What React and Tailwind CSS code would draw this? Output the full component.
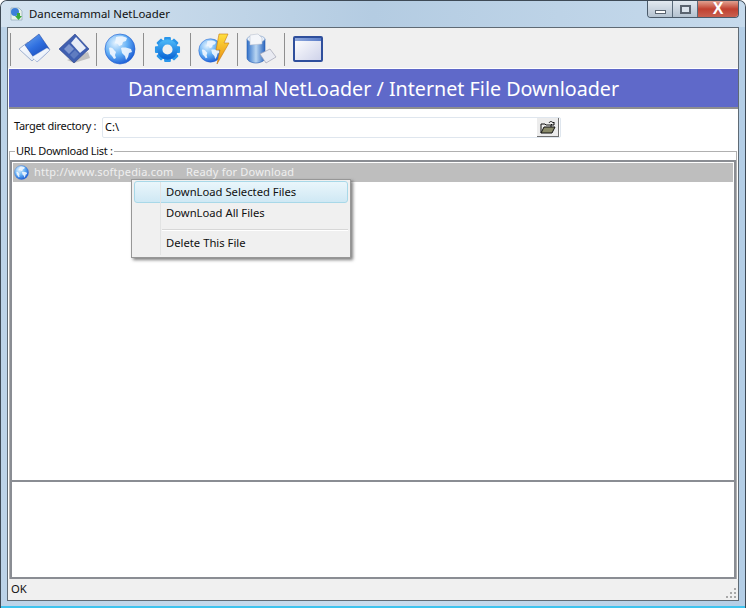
const uiFont = { fontFamily: '"Noto Sans", "DejaVu Sans", sans-serif' };

function Defs() {
  return (
    <svg width="0" height="0" className="absolute">
      <defs>
        <linearGradient id="blue" x1="0" y1="0" x2="0.6" y2="1">
          <stop offset="0" stopColor="#6fa8ee" />
          <stop offset="0.5" stopColor="#2f6fe0" />
          <stop offset="1" stopColor="#1644b0" />
        </linearGradient>
        <linearGradient id="sheet" x1="0" y1="0" x2="1" y2="1">
          <stop offset="0" stopColor="#ffffff" />
          <stop offset="1" stopColor="#dfe8f6" />
        </linearGradient>
        <radialGradient id="globe" cx="0.35" cy="0.3" r="0.8">
          <stop offset="0" stopColor="#e4f3ff" />
          <stop offset="0.5" stopColor="#64b0f5" />
          <stop offset="1" stopColor="#0f4fd0" />
        </radialGradient>
        <linearGradient id="gear" x1="0" y1="0" x2="0" y2="1">
          <stop offset="0" stopColor="#47b2f5" />
          <stop offset="1" stopColor="#0f6bd8" />
        </linearGradient>
        <linearGradient id="bolt" x1="0" y1="0" x2="0" y2="1">
          <stop offset="0" stopColor="#ffe040" />
          <stop offset="1" stopColor="#e88a10" />
        </linearGradient>
        <linearGradient id="db" x1="0" y1="0" x2="1" y2="0">
          <stop offset="0" stopColor="#2f6fc8" />
          <stop offset="0.5" stopColor="#b9d6f2" />
          <stop offset="1" stopColor="#2a66bf" />
        </linearGradient>
      </defs>
    </svg>
  );
}

function Continents() {
  return (
    <g fill="#f2f8ff" opacity="0.9">
      <path d="M12 4c3-1 8-1 11 1l-1 3-3 1-1 3-3 1-1-2-3-1z" />
      <path d="M17 15c3-1 7 0 10 1l1 3-3 1-1 4-2 3-1-4-3-3z" />
      <path d="M5 15c2-1 4 0 5 2l2 2-1 3 1 3-2 1-2-3-2-2z" />
    </g>
  );
}

function FolderIcon() {
  return (
    <svg width="32" height="32" viewBox="0 0 32 32">
      <path d="M0 16 9 9l7 16-3 3z" fill="url(#sheet)" stroke="#8aa0c4" strokeWidth="0.8" />
      <path d="M6 12 20 1l11 16-13 12z" fill="url(#blue)" stroke="#1c3f98" strokeWidth="0.5" />
      <path d="M13 24 28 15l3 2-13 12z" fill="url(#sheet)" stroke="#c0cce0" strokeWidth="0.4" />
    </svg>
  );
}

function DiamondIcon() {
  return (
    <svg width="32" height="32" viewBox="0 0 32 32">
      <path d="M9 27 30 19l2 6-16 5z" fill="#a0a0a0" opacity="0.6" />
      <path d="M1 16 17 1l14 15-15 14z" fill="#3f5fb0" stroke="#2a4288" strokeWidth="0.6" />
      <path d="M13 10 18 4l10 11-6 5z" fill="#e8edf6" />
      <path d="M6 16 11 11l5 5-5 5z" fill="#7f97cf" />
      <path d="M12 22 17 17l4 4-5 5z" fill="#5f7cc0" />
    </svg>
  );
}

function GlobeIcon({ size = 32 }) {
  return (
    <svg width={size} height={size} viewBox="0 0 32 32">
      <circle cx="16" cy="16" r="15" fill="url(#globe)" stroke="#1c5bd0" strokeWidth="0.6" />
      <Continents />
    </svg>
  );
}

function GearIcon() {
  const teeth = [0, 45, 90, 135, 180, 225, 270, 315];
  return (
    <svg width="27" height="27" viewBox="0 0 28 28">
      {teeth.map((a) => (
        <rect key={a} x="10.5" y="1" width="7" height="6" rx="1" fill="#2a96ea" transform={`rotate(${a} 14 14)`} />
      ))}
      <circle cx="14" cy="14" r="8" fill="none" stroke="url(#gear)" strokeWidth="5.5" />
    </svg>
  );
}

function GlobeBoltIcon() {
  return (
    <svg width="32" height="32" viewBox="0 0 32 32">
      <g transform="translate(0 5) scale(0.78)">
        <circle cx="16" cy="16" r="15" fill="url(#globe)" stroke="#1c5bd0" strokeWidth="0.6" />
        <Continents />
      </g>
      <path d="M21 1h9l-4 9h5L19 31l3-14h-4z" fill="url(#bolt)" stroke="#c87a10" strokeWidth="0.6" />
    </svg>
  );
}

function DatabaseIcon() {
  return (
    <svg width="32" height="32" viewBox="0 0 32 32">
      <path d="M2 6v19c0 3 5 5 9 5s9-2 9-5V6z" fill="url(#db)" stroke="#2a5fb0" strokeWidth="0.6" />
      <ellipse cx="11" cy="6" rx="9" ry="3.5" fill="#e8f0fa" stroke="#7a9cc8" strokeWidth="0.6" />
      <path d="M5 2 13 1l4 4v6l-12 1z" fill="#f4f6fa" stroke="#b0b8c8" strokeWidth="0.5" />
      <path d="M15 21 25 16l6 8-10 6z" fill="#e9ebf2" stroke="#a0a4b4" strokeWidth="0.7" />
    </svg>
  );
}

function WindowIcon() {
  return (
    <div className="w-[30px] h-[26px] rounded-[2px] border-2 border-[#2f4f9c] bg-gradient-to-br from-white to-[#cfd3ea] overflow-hidden">
      <div className="h-[3px] bg-gradient-to-r from-[#8fa8dc] to-[#5a7cc8]" />
    </div>
  );
}

function ToolCell({ children, className }) {
  return (
    <>
      <div className="w-px h-[33px] bg-[#8f8f8f] shrink-0" />
      <div className={`flex items-center justify-center h-full shrink-0 ${className}`}>{children}</div>
    </>
  );
}

function Titlebar() {
  return (
    <div className="h-[26px] flex items-start shrink-0 bg-gradient-to-r from-[#d4e3f0] via-[#b4cce2] to-[#c6daec]">
      <div className="flex items-center pl-[7px] pt-[5px] gap-[5px]">
        <svg width="16" height="16" viewBox="0 0 16 16">
          <path d="M3 2h8l3 3v9H3z" fill="#e8f2e8" stroke="#90a8b8" strokeWidth="0.7" />
          <circle cx="7" cy="6" r="4" fill="#3d7fd8" />
          <path d="M9 7h3v3h2l-3.5 4L7 10h2z" fill="#3aa83a" />
        </svg>
        <span className="text-[11.4px] leading-4 text-[#101010]">Dancemammal NetLoader</span>
      </div>
      <div className="ml-auto mr-[6px] flex h-[17px] w-[92px] rounded-b-[4px] border border-t-0 border-[#4a5a6a] overflow-hidden">
        <div className="w-[25px] flex items-end justify-center pb-[3px] bg-gradient-to-b from-[#e2e9f0] to-[#b4c2d0] border-r border-[#5a6a7a]">
          <div className="w-[11px] h-[4px] border border-[#5a6470] bg-white" />
        </div>
        <div className="w-[25px] flex items-center justify-center bg-gradient-to-b from-[#e2e9f0] to-[#b4c2d0] border-r border-[#5a6a7a]">
          <div className="w-[11px] h-[9px] border-2 border-[#5a6470] bg-[#dbe4ed]" />
        </div>
        <div className="flex-1 flex items-center justify-center bg-gradient-to-b from-[#e0a090] via-[#c04030] to-[#c86050]">
          <span className="text-[16px] leading-none font-bold text-white" style={{ fontFamily: '"Liberation Sans", sans-serif' }}>X</span>
        </div>
      </div>
    </div>
  );
}

function ContextMenu() {
  return (
    <div className="absolute left-[130px] top-[178px] w-[220px] h-[79px] bg-[#f0f0f0] border border-[#979797] shadow-[2px_2px_3px_rgba(0,0,0,0.5)] text-[11.25px] text-[#101010]">
      <div className="absolute left-[28px] top-[2px] bottom-[2px] w-px bg-[#e2e3e3]" />
      <div className="h-[22px] ml-[2px] mr-[2px] mt-[1px] flex items-center pl-[31px] rounded-[3px] border border-[#a8d8e8] bg-gradient-to-b from-[#eaf6fb] to-[#cfe8f4]">DownLoad Selected Files</div>
      <div className="h-[21px] flex items-center pl-[34px]">DownLoad All Files</div>
      <div className="ml-[30px] mr-[2px] mt-[5px] h-[2px] border-t border-[#d7d7d7] border-b-white border-b" />
      <div className="h-[22px] mt-[1px] flex items-center pl-[34px]">Delete This File</div>
    </div>
  );
}

export default function App() {
  return (
    <div className="relative w-[746px] h-[608px] overflow-hidden rounded-t-[7px] border-t border-x border-[#3e4a56] bg-gradient-to-r from-[#bcd3e8] via-[#c8dcee] to-[#b4cee6] flex flex-col" style={uiFont}>
      <Defs />
      <Titlebar />

      <div className="mx-[6px] h-[574px] border border-[#5f6a74] bg-white flex flex-col shrink-0">
        {/* toolbar */}
        <div className="h-[40px] bg-[#f0f0f0] flex items-center pl-[2px] pt-[2px] shrink-0">
          <ToolCell className="w-[85px] gap-[7px] pl-[2px]">
            <FolderIcon />
            <DiamondIcon />
          </ToolCell>
          <ToolCell className="w-[46px]"><GlobeIcon /></ToolCell>
          <ToolCell className="w-[46px]"><GearIcon /></ToolCell>
          <ToolCell className="w-[46px]"><GlobeBoltIcon /></ToolCell>
          <ToolCell className="w-[46px]"><DatabaseIcon /></ToolCell>
          <ToolCell className="w-[46px]"><WindowIcon /></ToolCell>
        </div>

        {/* banner */}
        <div className="h-[41px] ml-[1px] pt-[2px] border-t border-white border-b-[2px] border-b-[#8f8f8f] bg-[#5f69c9] flex items-center justify-center shrink-0">
          <span className="text-[19.7px] text-white">Dancemammal NetLoader / Internet File Downloader</span>
        </div>

        {/* target directory */}
        <div className="h-[35px] flex items-start pt-[8px] pl-[6px] shrink-0">
          <span className="text-[11px] tracking-[-0.3px] leading-4 mt-[1px] w-[88px] whitespace-nowrap text-[#101010]">Target directory :</span>
          <div className="w-[459px] h-[21px] rounded-[2px] border border-[#dfe6ee] flex items-center justify-between pl-[2px] pr-[1px]">
            <span className="text-[11px] text-black">C:\</span>
            <div className="w-[22px] h-[19px] bg-[#ececec] border-r border-b border-[#6f6f6f] flex items-center justify-center">
              <svg width="16" height="14" viewBox="0 0 16 14">
                <path d="M1 13V4h4l1 1h5v2" fill="none" stroke="#101010" />
                <path d="M1 13l3-6h11l-3 6z" fill="#8a8a6a" stroke="#101010" />
                <path d="M9 3c1-2 3-2 4 0l1-1v3h-3l1-1" fill="none" stroke="#101010" />
              </svg>
            </div>
          </div>
        </div>

        {/* group box */}
        <fieldset className="mx-[1px] h-[435px] border-t border-x border-[#b0b0b0] min-w-0 shrink-0">
          <legend className="ml-[5px] px-px text-[11px] tracking-[-0.3px] leading-[14px] text-[#101010]">URL Download List :</legend>
          <div className="mt-[2px] h-[320px] border-x-2 border-t-2 border-[#8a8d93] p-px">
            <div className="h-[19px] bg-[#bebebe] flex items-center pl-[1px] gap-[5px]">
              <GlobeIcon size={15} />
              <span className="text-[11px] leading-[14px] mb-[2px] tracking-[0.2px] whitespace-nowrap text-[#efefef] w-[147px]">http://www.softpedia.com</span>
              <span className="text-[11px] leading-[14px] mb-[2px] tracking-[0.2px] whitespace-nowrap text-[#efefef]">Ready for Download</span>
            </div>
          </div>
          <div className="h-[99px] border-2 border-[#8a8d93]" />
        </fieldset>

        {/* status bar */}
        <div className="flex-1 bg-[#f0f0f0] relative flex items-center pl-[3px]">
          <span className="text-[11.25px] text-[#101010]">OK</span>
          <svg className="absolute right-[1px] bottom-[1px]" width="12" height="12" viewBox="0 0 12 12" fill="#a8a8a8">
            <rect x="9" y="1" width="2" height="2" />
            <rect x="5" y="5" width="2" height="2" />
            <rect x="9" y="5" width="2" height="2" />
            <rect x="1" y="9" width="2" height="2" />
            <rect x="5" y="9" width="2" height="2" />
            <rect x="9" y="9" width="2" height="2" />
          </svg>
        </div>
      </div>

      <div className="flex-1 border-b-2 border-[#3fc3ee]" />
      <ContextMenu />
    </div>
  );
}
